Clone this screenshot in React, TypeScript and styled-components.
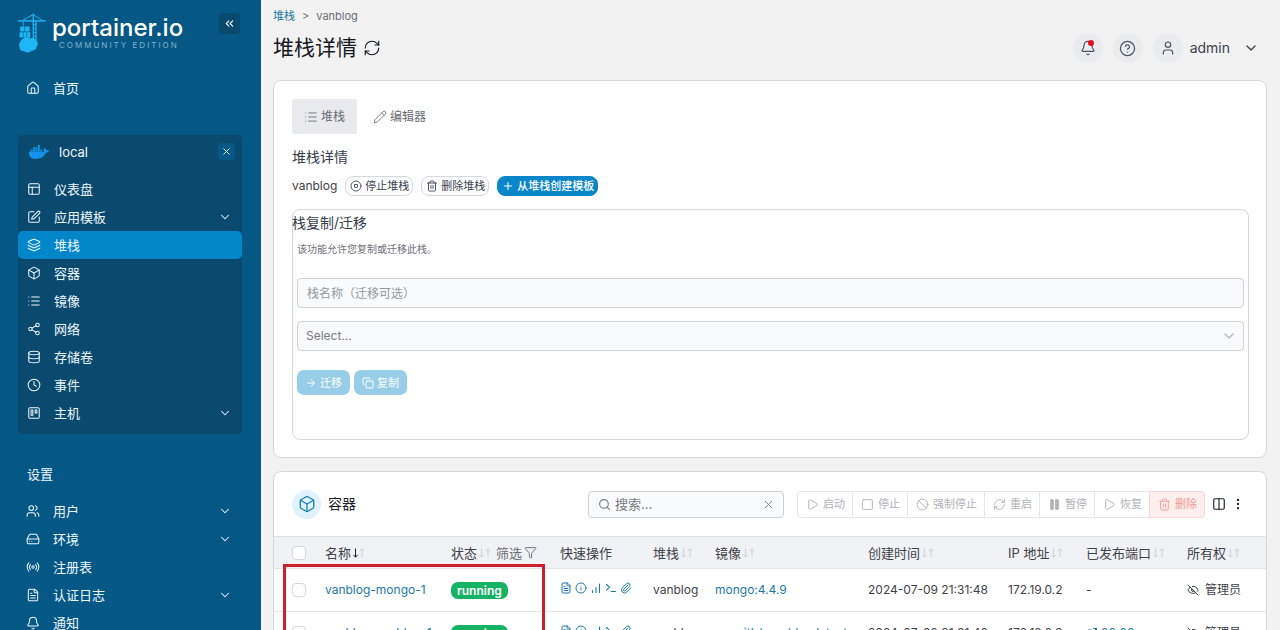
import React from 'react';
import styled, { createGlobalStyle, css } from 'styled-components';
import {
  House, Layout, SquarePen, Layers, Box, List, Share2, Database, Clock, Trello, Users, HardDrive, Radio,
  FileText, Bell, ChevronDown, ChevronsLeft, X, RefreshCw, CircleHelp, User, Pencil, CircleStop, Trash2, Plus,
  ArrowRight, Copy, Search, Play, Square, Ban, Pause, Columns2, EllipsisVertical, Info, Paperclip, Funnel,
  EyeOff, ExternalLink, LucideIcon,
} from 'lucide-react';
import { FaDocker } from 'react-icons/fa';

const GlobalStyle = createGlobalStyle`
  *, *::before, *::after { box-sizing: border-box; }
  body {
    margin: 0;
    background: #f2f2f3;
    color: #3f4249;
    font: 13px/20px Inter, "Noto Sans CJK SC", sans-serif;
  }
  button, input, select { font: inherit; color: inherit; }
  button { cursor: pointer; padding: 0; border: 0; background: none; }
  h1, h2, p, ul, ol { margin: 0; padding: 0; font-weight: 400; }
  li { list-style: none; }
  a { color: #1d78a8; text-decoration: none; }
  svg { flex: none; display: block; }
`;

const Page = styled.div`
  display: flex;
  height: 100vh;
  overflow: hidden;
`;

/* ---------- Sidebar ---------- */

const Sidebar = styled.aside`
  flex: 0 0 261px;
  overflow: hidden;
  padding: 0 19px 0 18px;
  background: #055886;
  color: #eef7fc;
`;

const Brand = styled.header`
  display: flex;
  align-items: flex-start;
  height: 74px;
  padding: 13px 2px 0 0;
`;

const BrandText = styled.div`
  flex: 1;
  padding: 2px 0 0 6px;
  white-space: nowrap;
`;

const BrandName = styled.div`
  font: 500 24px/26px Inter, sans-serif;
  color: #fff;
`;

const BrandEdition = styled.div`
  padding-left: 7px;
  font: 8px/8px Inter, sans-serif;
  letter-spacing: 2px;
  color: #86afc9;
`;

const SquareButton = styled.button<{ $size: number; $bg: string }>`
  display: flex;
  align-items: center;
  justify-content: center;
  width: ${(p) => p.$size}px;
  height: ${(p) => p.$size}px;
  border-radius: 4px;
  background: ${(p) => p.$bg};
`;

const Panel = styled.section`
  margin: 33px 0 30px;
  padding-bottom: 7px;
  border-radius: 4px;
  background: #0b4a6f;
`;

const PanelHead = styled.div`
  display: flex;
  align-items: center;
  gap: 10px;
  height: 33px;
  margin-bottom: 7px;
  padding: 0 7px 0 11px;
  span { flex: 1; }
`;

const NavItem = styled.a<{ $active?: boolean; $outer?: boolean }>`
  display: flex;
  align-items: center;
  gap: 13px;
  height: 28px;
  padding: 0 10px 0 ${(p) => (p.$outer ? 8 : 9)}px;
  border-radius: 5px;
  color: inherit;
  background: ${(p) => (p.$active ? '#0086c9' : 'transparent')};
  span { flex: 1; }
`;

const NavHeading = styled.h2`
  height: 20px;
  margin-bottom: 13px;
  padding-left: 9px;
  font-size: 13px;
`;

type Entry = { icon: LucideIcon; label: string; expandable?: boolean; active?: boolean };

const homeNav: Entry[] = [{ icon: House, label: '首页' }];

const environmentNav: Entry[] = [
  { icon: Layout, label: '仪表盘' },
  { icon: SquarePen, label: '应用模板', expandable: true },
  { icon: Layers, label: '堆栈', active: true },
  { icon: Box, label: '容器' },
  { icon: List, label: '镜像' },
  { icon: Share2, label: '网络' },
  { icon: Database, label: '存储卷' },
  { icon: Clock, label: '事件' },
  { icon: Trello, label: '主机', expandable: true },
];

const settingsNav: Entry[] = [
  { icon: Users, label: '用户', expandable: true },
  { icon: HardDrive, label: '环境', expandable: true },
  { icon: Radio, label: '注册表' },
  { icon: FileText, label: '认证日志', expandable: true },
  { icon: Bell, label: '通知' },
];

function NavList({ entries, outer }: { entries: Entry[]; outer?: boolean }) {
  return (
    <ul>
      {entries.map(({ icon: Icon, label, expandable, active }) => (
        <li key={label}>
          <NavItem href="#" $active={active} $outer={outer}>
            <Icon size={14} strokeWidth={1.75} />
            <span>{label}</span>
            {expandable && <ChevronDown size={14} strokeWidth={1.75} />}
          </NavItem>
        </li>
      ))}
    </ul>
  );
}

function CraneLogo() {
  return (
    <svg width="28" height="41" viewBox="0 0 28 41" fill="#1fb6f6" aria-hidden="true">
      <path d="M0 7.2h27.600v1.400H0z" />
      <path d="M14.600 0.500h1.300v28h-1.300zM17.300 8h1.300v20h-1.300z" />
      <path d="M15.200 1.500 25 8M15.200 1.500 3.500 8" fill="none" stroke="#1fb6f6" strokeWidth="1" />
      <path d="M4.800 8h.8v5.500h-.8zM15 11h3v.8h-3zM15 15h3v.8h-3zM15 19h3v.8h-3zM15 23h3v.8h-3z" />
      <path d="M2.200 13.400h4.300v5H2.200zM7.200 13.400h4.300v5H7.200zM1.600 19.200h3.200v5.200H1.600zM5.400 19.200h3.200v5.200H5.400zM9.200 19.200h3v5.200h-3z" />
      <path d="M5.200 25.600c2.200-2 5.400-1.600 7 0 2.200-1.200 5.400-.4 6 2.200 2.200 1.200 2.200 4.200.4 5.600 0 2.800-2.600 4.600-5 4-1.800 2.600-6 2.600-7.600.6-2.600.6-4.800-1.600-4.200-4-1.600-2.400-.6-4.800 1.200-5.600 0-1.200 1-2.400 2.200-2.800z" />
    </svg>
  );
}

/* ---------- Main area ---------- */

const Main = styled.main`
  flex: 1;
  min-width: 0;
  overflow: hidden;
  padding: 6px 13px 0 12px;
`;

const Breadcrumb = styled.nav`
  display: flex;
  gap: 7px;
  color: #6b7078;
  font-size: 11px;
`;

const TitleBar = styled.header`
  display: flex;
  align-items: center;
  height: 44px;
  margin-bottom: 10px;
`;

const Title = styled.h1`
  display: flex;
  flex: 1;
  align-items: center;
  gap: 6px;
  color: #16191f;
  font-size: 21px;
  line-height: 32px;
`;

const UserTools = styled.div`
  display: flex;
  align-items: center;
  gap: 10px;
  padding-right: 8px;
`;

const RoundButton = styled.button`
  position: relative;
  display: flex;
  align-items: center;
  justify-content: center;
  width: 30px;
  height: 30px;
  border-radius: 50%;
  background: #ebecf0;
  color: #4a5366;
`;

const AlertDot = styled.i`
  position: absolute;
  top: 7px;
  right: 9px;
  width: 6px;
  height: 6px;
  border-radius: 50%;
  background: #e2101c;
`;

const UserMenu = styled.button`
  display: flex;
  align-items: center;
  gap: 7px;
  font-size: 14px;
  > svg { margin-left: 6px; }
`;

const UserBadge = styled.span`
  display: flex;
  align-items: center;
  justify-content: center;
  width: 30px;
  height: 30px;
  border-radius: 50%;
  background: #ebecf0;
  color: #4a5366;
`;

const Card = styled.section`
  position: relative;
  margin-bottom: 13px;
  border: 1px solid #d6d8dc;
  border-radius: 8px;
  background: #fff;
`;

const StackBody = styled.div`
  padding: 18px 17px 17px 18px;
`;

const Tabs = styled.div`
  display: flex;
  gap: 4px;
  margin-bottom: 13px;
`;

const Tab = styled.button<{ $active?: boolean }>`
  display: flex;
  align-items: center;
  gap: 3px;
  height: 35px;
  padding: 0 12px;
  border-radius: 3px;
  color: #6a6d73;
  font-size: 12px;
  background: ${(p) => (p.$active ? '#e9eaee' : 'transparent')};
`;

const SectionTitle = styled.h2`
  color: #363c4a;
  font-size: 14px;
  line-height: 20px;
`;

const StackActions = styled.div`
  display: flex;
  align-items: center;
  gap: 8px;
  margin: 9px 0 13px;
  font-size: 12px;
`;

const Pill = styled.button<{ $primary?: boolean }>`
  display: flex;
  align-items: center;
  gap: 3px;
  height: 20px;
  padding: 0 3px 0 4px;
  border: 1px solid #d5d8de;
  border-radius: 8px;
  color: #3c4252;
  font-size: 11px;
  line-height: 16px;
  ${(p) => p.$primary && css`
    border-color: #0b86c8;
    background: #0b86c8;
    color: #fff;
    font-weight: 500;
  `}
`;

const MigrateBox = styled.form`
  min-height: 231px;
  padding: 3px 4px 0;
  border: 1px solid #d6d8dc;
  border-radius: 8px;
`;

const BoxTitle = styled(SectionTitle)`
  margin-left: -5px;
`;

const Help = styled.p`
  margin: 6px 0 19px;
  color: #6e7178;
  font-size: 10px;
`;

const fieldStyle = css`
  display: block;
  width: 100%;
  height: 30px;
  border: 1px solid #d0d3d7;
  border-radius: 4px;
  background: #f9fafb;
  color: #777b80;
  font-size: 12px;
`;

const TextField = styled.input`
  ${fieldStyle}
  padding: 0 9px;
  margin-bottom: 13px;
  &::placeholder { color: #96999d; }
`;

const SelectWrap = styled.div`
  position: relative;
  color: #b5b8bc;
  svg { position: absolute; right: 7px; top: 7px; pointer-events: none; }
`;

const SelectField = styled.select`
  ${fieldStyle}
  padding: 0 8px;
  appearance: none;
`;

const FormActions = styled.div`
  display: flex;
  gap: 4px;
  margin-top: 19px;
`;

const SoftButton = styled.button`
  display: flex;
  align-items: center;
  gap: 3px;
  height: 25px;
  padding: 0 8px;
  border-radius: 7px;
  background: #98cde8;
  color: #fff;
  font-size: 11px;
`;

/* ---------- Container table ---------- */

const TableBar = styled.header`
  display: flex;
  align-items: center;
  height: 64px;
  padding: 0 21px 0 18px;
`;

const CircleIcon = styled.span`
  display: flex;
  align-items: center;
  justify-content: center;
  width: 29px;
  height: 29px;
  margin-right: 7px;
  border-radius: 50%;
  background: #e0f2fe;
  color: #1a80b4;
`;

const TableTitle = styled(SectionTitle)`
  flex: 1;
  color: #1d2129;
`;

const SearchBox = styled.label`
  display: flex;
  align-items: center;
  gap: 4px;
  width: 196px;
  height: 27px;
  margin-right: 14px;
  padding: 0 8px 0 9px;
  border: 1px solid #cdd1d6;
  border-radius: 4px;
  background: #f9fafb;
  color: #777b82;
  input {
    flex: 1;
    min-width: 0;
    padding: 0;
    border: 0;
    outline: 0;
    background: none;
    &::placeholder { color: #777b82; }
  }
`;

const ButtonGroup = styled.div`
  display: flex;
  margin-right: 7px;
`;

const GroupButton = styled.button<{ $danger?: boolean }>`
  display: flex;
  align-items: center;
  gap: 4px;
  height: 27px;
  padding: 0 7px 0 8px;
  border: 1px solid #e4e6e9;
  margin-left: -1px;
  color: #b0b3b8;
  font-size: 11px;
  &:first-child { border-radius: 4px 0 0 4px; }
  &:last-child { border-radius: 0 4px 4px 0; }
  ${(p) => p.$danger && css`
    border-color: #f8d8d6;
    background: #feeeed;
    color: #ee9d97;
  `}
`;

const IconButtons = styled.div`
  display: flex;
  align-items: center;
  gap: 5px;
  color: #1d2129;
`;

const Table = styled.table`
  width: 100%;
  border-collapse: collapse;
  table-layout: fixed;
  white-space: nowrap;
  th, td { padding: 0; text-align: left; font-weight: 400; }
  th { height: 32px; border-top: 1px solid #dfe1e5; background: #f1f2f5; }
  td { height: 43px; border-top: 1px solid #e2e4e7; font-size: 12px; }
  th:first-child, td:first-child { padding-left: 18px; }
`;

const CheckBox = styled.input`
  appearance: none;
  display: block;
  width: 14px;
  height: 14px;
  margin: 0;
  border: 1px solid #d3d6db;
  border-radius: 4px;
  background: #fff;
`;

const Inline = styled.span<{ $gap?: number }>`
  display: flex;
  align-items: center;
  gap: ${(p) => p.$gap ?? 2}px;
`;

const FilterLabel = styled.button`
  display: flex;
  align-items: center;
  gap: 2px;
  margin-left: 3px;
  color: #6b6f77;
`;

const QuickLinks = styled.div`
  display: flex;
  gap: 3px;
  padding-bottom: 4px;
`;

const Status = styled.span`
  display: block;
  width: fit-content;
  padding: 0 6px;
  border-radius: 7px;
  background: #16b364;
  color: #fff;
  font-weight: 600;
  line-height: 17px;
`;

const Highlight = styled.div`
  position: absolute;
  left: 9px;
  top: 92px;
  width: 262px;
  height: 150px;
  border: 3px solid #cf1f2d;
  pointer-events: none;
`;

function SortArrows({ sorted }: { sorted?: boolean }) {
  return (
    <svg width="12" height="10" viewBox="0 0 12 10" fill="none" strokeWidth="1" aria-hidden="true">
      <path d="M2.500 0.500v8.500M0.300 6.800l2.200 2.400 2.200-2.400" stroke={sorted ? '#1d2129' : '#cfd2d7'} />
      <path d="M9 9.500v-8.500M6.800 3.200l2.200-2.400 2.200 2.400" stroke="#cfd2d7" />
    </svg>
  );
}

function StatsIcon() {
  return (
    <svg width="12" height="12" viewBox="0 0 12 12" stroke="currentColor" strokeWidth="1.100" strokeLinecap="round" aria-hidden="true">
      <path d="M2.500 10.500v-2M6 10.500v-5M9.500 10.500v-8.500" />
    </svg>
  );
}

function PromptIcon() {
  return (
    <svg width="12" height="12" viewBox="0 0 12 12" fill="none" stroke="currentColor" strokeWidth="1.100" strokeLinecap="round" aria-hidden="true">
      <path d="M1.500 2.500l3 2.800-3 2.800M6 9.500h4.500" />
    </svg>
  );
}

const bulkActions: { icon: LucideIcon; label: string; danger?: boolean; solid?: boolean }[] = [
  { icon: Play, label: '启动' },
  { icon: Square, label: '停止' },
  { icon: Ban, label: '强制停止' },
  { icon: RefreshCw, label: '重启' },
  { icon: Pause, label: '暂停', solid: true },
  { icon: Play, label: '恢复' },
  { icon: Trash2, label: '删除', danger: true },
];

const columnWidths = [51, 126, 109, 93, 62, undefined, 140, 78, 101, 79];

const containers = [
  { name: 'vanblog-mongo-1', image: 'mongo:4.4.9', ip: '172.19.0.2', port: '' },
  { name: 'vanblog-vanblog-1', image: 'mereith/van-blog:latest', ip: '172.19.0.3', port: '80:80' },
];

function ContainerTable() {
  return (
    <Table>
      <colgroup>
        {columnWidths.map((width, i) => <col key={i} width={width} />)}
      </colgroup>
      <thead>
        <tr>
          <th><CheckBox type="checkbox" aria-label="全选" /></th>
          <th><Inline>名称<SortArrows sorted /></Inline></th>
          <th>
            <Inline>
              状态<SortArrows />
              <FilterLabel type="button">筛选<Funnel size={13} strokeWidth={1.75} /></FilterLabel>
            </Inline>
          </th>
          <th>快速操作</th>
          {['堆栈', '镜像', '创建时间', 'IP 地址', '已发布端口', '所有权'].map((label) => (
            <th key={label}><Inline>{label}<SortArrows /></Inline></th>
          ))}
        </tr>
      </thead>
      <tbody>
        {containers.map((c) => (
          <tr key={c.name}>
            <td><CheckBox type="checkbox" aria-label={c.name} /></td>
            <td><a href="#">{c.name}</a></td>
            <td><Status>running</Status></td>
            <td>
              <QuickLinks>
                <a href="#" aria-label="日志"><FileText size={12} /></a>
                <a href="#" aria-label="详情"><Info size={12} /></a>
                <a href="#" aria-label="统计"><StatsIcon /></a>
                <a href="#" aria-label="控制台"><PromptIcon /></a>
                <a href="#" aria-label="附加"><Paperclip size={12} /></a>
              </QuickLinks>
            </td>
            <td>vanblog</td>
            <td><a href="#">{c.image}</a></td>
            <td>2024-07-09 21:31:48</td>
            <td>{c.ip}</td>
            <td>
              {c.port ? <a href="#"><Inline $gap={3}><ExternalLink size={12} />{c.port}</Inline></a> : '-'}
            </td>
            <td><Inline $gap={6}><EyeOff size={12} />管理员</Inline></td>
          </tr>
        ))}
      </tbody>
    </Table>
  );
}

export default function App() {
  return (
    <Page>
      <GlobalStyle />
      <Sidebar>
        <Brand>
          <CraneLogo />
          <BrandText>
            <BrandName>portainer.io</BrandName>
            <BrandEdition>COMMUNITY EDITION</BrandEdition>
          </BrandText>
          <SquareButton type="button" aria-label="收起" $size={21} $bg="#0b4a6f"><ChevronsLeft size={13} /></SquareButton>
        </Brand>
        <NavList outer entries={homeNav} />
        <Panel>
          <PanelHead>
            <FaDocker size={20} color="#1593ea" />
            <span>local</span>
            <SquareButton type="button" aria-label="关闭" $size={17} $bg="#065986"><X size={11} /></SquareButton>
          </PanelHead>
          <NavList entries={environmentNav} />
        </Panel>
        <NavHeading>设置</NavHeading>
        <NavList outer entries={settingsNav} />
      </Sidebar>

      <Main>
        <Breadcrumb aria-label="breadcrumb">
          <a href="#">堆栈</a>
          <span>&gt;</span>
          <span>vanblog</span>
        </Breadcrumb>
        <TitleBar>
          <Title>堆栈详情<RefreshCw size={18} strokeWidth={1.5} /></Title>
          <UserTools>
            <RoundButton type="button" aria-label="通知"><Bell size={16} strokeWidth={1.75} /><AlertDot /></RoundButton>
            <RoundButton type="button" aria-label="帮助"><CircleHelp size={17} strokeWidth={1.75} /></RoundButton>
            <UserMenu type="button">
              <UserBadge><User size={16} strokeWidth={1.75} /></UserBadge>
              admin
              <ChevronDown size={16} />
            </UserMenu>
          </UserTools>
        </TitleBar>

        <Card>
          <StackBody>
            <Tabs>
              <Tab type="button" $active><List size={14} strokeWidth={1.5} />堆栈</Tab>
              <Tab type="button"><Pencil size={14} strokeWidth={1.5} />编辑器</Tab>
            </Tabs>
            <SectionTitle>堆栈详情</SectionTitle>
            <StackActions>
              vanblog
              <Pill type="button"><CircleStop size={12} strokeWidth={1.75} />停止堆栈</Pill>
              <Pill type="button"><Trash2 size={12} strokeWidth={1.75} />删除堆栈</Pill>
              <Pill type="button" $primary><Plus size={12} />从堆栈创建模板</Pill>
            </StackActions>
            <MigrateBox>
              <BoxTitle>栈复制/迁移</BoxTitle>
              <Help>该功能允许您复制或迁移此栈。</Help>
              <TextField type="text" aria-label="栈名称" placeholder="栈名称（迁移可选）" />
              <SelectWrap>
                <SelectField aria-label="环境">
                  <option>Select...</option>
                </SelectField>
                <ChevronDown size={16} />
              </SelectWrap>
              <FormActions>
                <SoftButton type="button"><ArrowRight size={12} />迁移</SoftButton>
                <SoftButton type="button"><Copy size={12} />复制</SoftButton>
              </FormActions>
            </MigrateBox>
          </StackBody>
        </Card>

        <Card>
          <TableBar>
            <CircleIcon><Box size={18} strokeWidth={1.75} /></CircleIcon>
            <TableTitle>容器</TableTitle>
            <SearchBox>
              <Search size={13} />
              <input type="text" aria-label="搜索" placeholder="搜索..." />
              <X size={13} strokeWidth={1.75} />
            </SearchBox>
            <ButtonGroup>
              {bulkActions.map(({ icon: Icon, label, danger, solid }) => (
                <GroupButton key={label} type="button" $danger={danger}>
                  <Icon size={13} strokeWidth={1.75} fill={solid ? 'currentColor' : 'none'} />
                  {label}
                </GroupButton>
              ))}
            </ButtonGroup>
            <IconButtons>
              <button type="button" aria-label="列"><Columns2 size={14} /></button>
              <button type="button" aria-label="更多"><EllipsisVertical size={14} /></button>
            </IconButtons>
          </TableBar>
          <ContainerTable />
          <Highlight />
        </Card>
      </Main>
    </Page>
  );
}
